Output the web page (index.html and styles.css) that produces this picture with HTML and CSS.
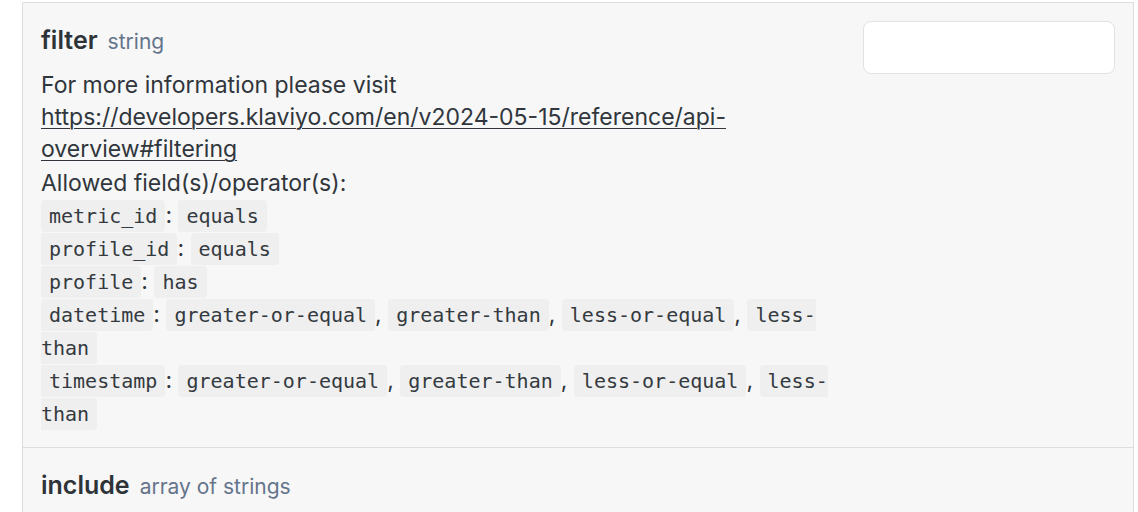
FILE: index.html
```html
<!DOCTYPE html>
<html>
<head>
<meta charset="utf-8">
<link rel="stylesheet" href="styles.css">
</head>
<body>
<div class="panel">
  <div class="row">
    <div class="info">
      <div class="title"><span class="name">filter</span><span class="type">string</span></div>
      <div class="desc">
        <p>For more information please visit<br><a href="#">https://developers.klaviyo.com/en/v2024-05-15/reference/api-overview#filtering</a></p>
        <p class="allowed">Allowed field(s)/operator(s):</p>
        <p class="code-line"><code>metric_id</code>: <code>equals</code></p>
        <p class="code-line"><code>profile_id</code>: <code>equals</code></p>
        <p class="code-line"><code>profile</code>: <code>has</code></p>
        <p class="code-line"><code>datetime</code>: <code>greater-or-equal</code>, <code>greater-than</code>, <code>less-or-equal</code>, <code>less-than</code></p>
        <p class="code-line"><code>timestamp</code>: <code>greater-or-equal</code>, <code>greater-than</code>, <code>less-or-equal</code>, <code>less-than</code></p>
      </div>
    </div>
    <input class="field" type="text">
  </div>
  <div class="row">
    <div class="info">
      <div class="title"><span class="name">include</span><span class="type">array of strings</span></div>
    </div>
  </div>
</div>
</body>
</html>
```
FILE: styles.css
```css
html, body {
  margin: 0;
  background: #ffffff;
}
body {
  font-family: Inter, "Noto Sans", sans-serif;
  color: #30363c;
}
.panel {
  margin: 2px 4px 0 22px;
  border-left: 1px solid #dedede;
  border-right: 1px solid #dedede;
  background: #f7f7f7;
  width: 1110px;
}
.row {
  display: flex;
  gap: 30px;
  align-items: flex-start;
  padding: 18px 18px 17px 18px;
  border-top: 1px solid #dedede;
}
.info {
  flex: 1;
  min-width: 0;
}
.title {
  display: flex;
  align-items: baseline;
  gap: 10px;
  line-height: 32px;
  padding-top: 3px;
}
.name {
  font-size: 25px;
  font-weight: 600;
  color: #2e3338;
}
.type {
  font-size: 21px;
  color: #64748b;
}
.desc {
  margin-top: 11px;
  font-size: 23px;
  line-height: 32px;
}
.desc p {
  margin: 0;
}
.desc p.allowed {
  margin-top: 2px;
}
.desc a {
  color: #30363c;
  text-decoration: underline;
  text-underline-offset: 3px;
  text-decoration-thickness: 1px;
}
.desc p.code-line {
  line-height: 33px;
}
code {
  font-family: "DejaVu Sans Mono", monospace;
  font-size: 20px;
  line-height: 20px;
  background: #efefef;
  border-radius: 4px;
  padding: 3.6px 8px;
  color: #343a40;
}
.field {
  flex: none;
  width: 252px;
  height: 53px;
  box-sizing: border-box;
  border: 1px solid #e2e2e2;
  border-radius: 8px;
  background: #ffffff;
  margin: 0;
}
```
